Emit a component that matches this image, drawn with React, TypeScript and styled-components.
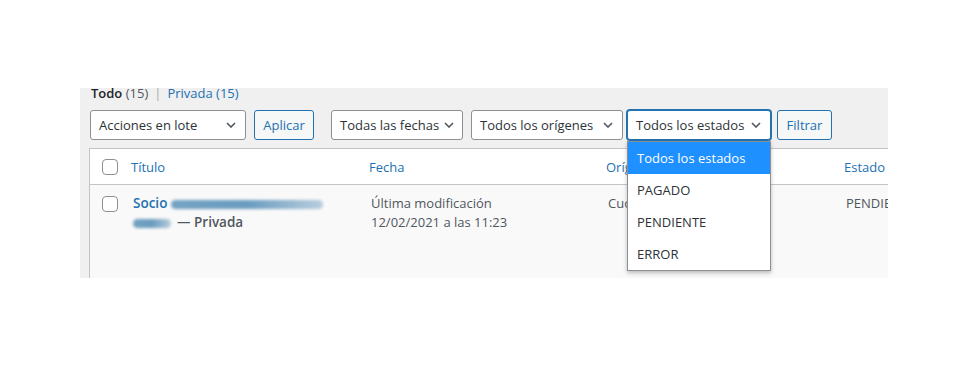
import React from 'react';
import styled, { createGlobalStyle } from 'styled-components';

const GlobalStyle = createGlobalStyle`
  html, body {
    margin: 0;
    padding: 0;
    background: #ffffff;
  }
  body {
    font-family: "Open Sans", "Noto Sans", sans-serif;
    font-size: 13px;
    color: #1d2327;
  }
`;

const Page = styled.div`
  padding: 85px 0 0 80px;
  width: 965px;
  height: 366px;
  box-sizing: border-box;
`;

// Grey admin area, the table runs past its right edge
const Panel = styled.div`
  width: 808px;
  height: 193px;
  background: linear-gradient(to bottom, transparent 3px, #f0f0f1 3px);
  padding-left: 9px;
  box-sizing: border-box;
  overflow: hidden;
  position: relative;
`;

const SubSub = styled.div`
  height: 16px;
  line-height: 16px;
  padding-left: 2px;
  white-space: nowrap;
  color: #50575e;
`;

const Current = styled.span`
  font-weight: 600;
  color: #1d2327;
`;

const Sep = styled.span`
  color: #a7aaad;
  margin: 0 6px;
`;

const SubLink = styled.span`
  color: #2271b1;
`;

const NavBar = styled.div`
  display: flex;
  align-items: center;
  margin: 9px 0 0 1px;
  height: 30px;
`;

const SelectBox = styled.div<{ $w: number; $focus?: boolean; $gap?: number }>`
  position: relative;
  flex-shrink: 0;
  width: ${(p) => p.$w}px;
  height: 30px;
  margin-left: ${(p) => p.$gap ?? 0}px;
  box-sizing: border-box;
  display: flex;
  align-items: center;
  justify-content: space-between;
  gap: 5px;
  padding: 0 9px 0 8px;
  background: #fff;
  border: 1px solid ${(p) => (p.$focus ? '#2271b1' : '#8c8f94')};
  box-shadow: ${(p) => (p.$focus ? '0 0 0 1px #2271b1' : 'none')};
  border-radius: 3px;
  color: #2c3338;
  font-size: 13px;
  white-space: nowrap;
`;

const ChevronSvg = styled.svg`
  flex-shrink: 0;
  display: block;
`;

const Button = styled.div<{ $w: number; $gap: number }>`
  flex-shrink: 0;
  width: ${(p) => p.$w}px;
  height: 30px;
  margin-left: ${(p) => p.$gap}px;
  box-sizing: border-box;
  display: flex;
  align-items: center;
  justify-content: center;
  border: 1px solid #2271b1;
  border-radius: 3px;
  background: #f6f7f7;
  color: #2271b1;
  font-size: 13px;
`;

const Dropdown = styled.ul`
  position: absolute;
  top: 30px;
  left: -1px;
  width: 144px;
  margin: 0;
  padding: 0;
  list-style: none;
  background: #fff;
  border: 1px solid #8c8f94;
  box-shadow: 0 2px 4px rgba(0, 0, 0, 0.25);
  box-sizing: border-box;
  z-index: 5;
`;

const Option = styled.li<{ $active?: boolean }>`
  height: 32px;
  line-height: 32px;
  padding-left: 9px;
  background: ${(p) => (p.$active ? '#1e90ff' : '#fff')};
  color: ${(p) => (p.$active ? '#fff' : '#2c3338')};
  font-size: 13px;
`;

const Table = styled.div`
  margin-top: 8px;
  width: 900px;
  border: 1px solid #c3c4c7;
  display: grid;
  grid-template-columns: 33px 238px 237px 238px 1fr;
`;

const HeadCell = styled.div`
  height: 35px;
  background: #fff;
  border-bottom: 1px solid #c3c4c7;
  display: flex;
  align-items: center;
  padding-left: 8px;
  color: #2271b1;
  white-space: nowrap;
`;

const CheckHeadCell = styled(HeadCell)`
  padding-left: 12px;
`;

const BodyCell = styled.div`
  height: 120px;
  background: #f9f9f9;
  padding: 9px 0 0 10px;
  line-height: 19px;
  color: #50575e;
  white-space: nowrap;
  box-sizing: border-box;
`;

const CheckBodyCell = styled(BodyCell)`
  padding: 11px 0 0 12px;
`;

const Check = styled.span`
  display: block;
  width: 16px;
  height: 16px;
  box-sizing: border-box;
  border: 1px solid #8c8f94;
  border-radius: 4px;
  background: #fff;
`;

const RowTitle = styled.span`
  font-weight: 600;
  color: #2271b1;
  font-size: 13.5px;
`;

const State = styled.span`
  font-weight: 600;
  color: #50575e;
  font-size: 13.5px;
`;

const Smudge = styled.span<{ $w: number; $left?: number; $right?: number }>`
  display: inline-block;
  vertical-align: middle;
  width: ${(p) => p.$w}px;
  height: 9px;
  margin-left: ${(p) => p.$left ?? 0}px;
  margin-right: ${(p) => p.$right ?? 0}px;
  border-radius: 5px;
  background: linear-gradient(90deg, rgba(60, 125, 170, 0.7), rgba(80, 140, 180, 0.85) 50%, rgba(120, 160, 195, 0.5));
  filter: blur(1.8px);
`;

const Chevron = () => (
  <ChevronSvg width="10" height="6" viewBox="0 0 10 6" aria-hidden>
    <path d="M1 1l4 4 4-4" fill="none" stroke="#50575e" strokeWidth="1.6" />
  </ChevronSvg>
);

const Select = ({ w, gap, focus, children }: { w: number; gap?: number; focus?: boolean; children: React.ReactNode }) => (
  <SelectBox $w={w} $gap={gap} $focus={focus}>
    <span>{children}</span>
    <Chevron />
  </SelectBox>
);

export default function App() {
  return (
    <>
      <GlobalStyle />
      <Page>
        <Panel>
          <SubSub>
            <Current>Todo</Current> (15)
            <Sep>|</Sep>
            <SubLink>Privada (15)</SubLink>
          </SubSub>

          <NavBar>
            <Select w={156}>Acciones en lote</Select>
            <Button $w={60} $gap={8}>Aplicar</Button>
            <Select w={132} gap={17}>Todas las fechas</Select>
            <Select w={152} gap={8}>Todos los orígenes</Select>
            <SelectBox $w={144} $gap={4} $focus>
              <span>Todos los estados</span>
              <Chevron />
              <Dropdown>
                <Option $active>Todos los estados</Option>
                <Option>PAGADO</Option>
                <Option>PENDIENTE</Option>
                <Option>ERROR</Option>
              </Dropdown>
            </SelectBox>
            <Button $w={55} $gap={6}>Filtrar</Button>
          </NavBar>

          <Table>
            <CheckHeadCell><Check /></CheckHeadCell>
            <HeadCell>Título</HeadCell>
            <HeadCell>Fecha</HeadCell>
            <HeadCell>Orígenes</HeadCell>
            <HeadCell>Estado</HeadCell>

            <CheckBodyCell><Check /></CheckBodyCell>
            <BodyCell>
              <div>
                <RowTitle>Socio</RowTitle>
                <Smudge $w={152} $left={4} />
              </div>
              <div>
                <Smudge $w={38} $right={6} />
                <State>— Privada</State>
              </div>
            </BodyCell>
            <BodyCell>
              <div>Última modificación</div>
              <div>12/02/2021 a las 11:23</div>
            </BodyCell>
            <BodyCell>Cuota socio</BodyCell>
            <BodyCell>PENDIENTE</BodyCell>
          </Table>
        </Panel>
      </Page>
    </>
  );
}
